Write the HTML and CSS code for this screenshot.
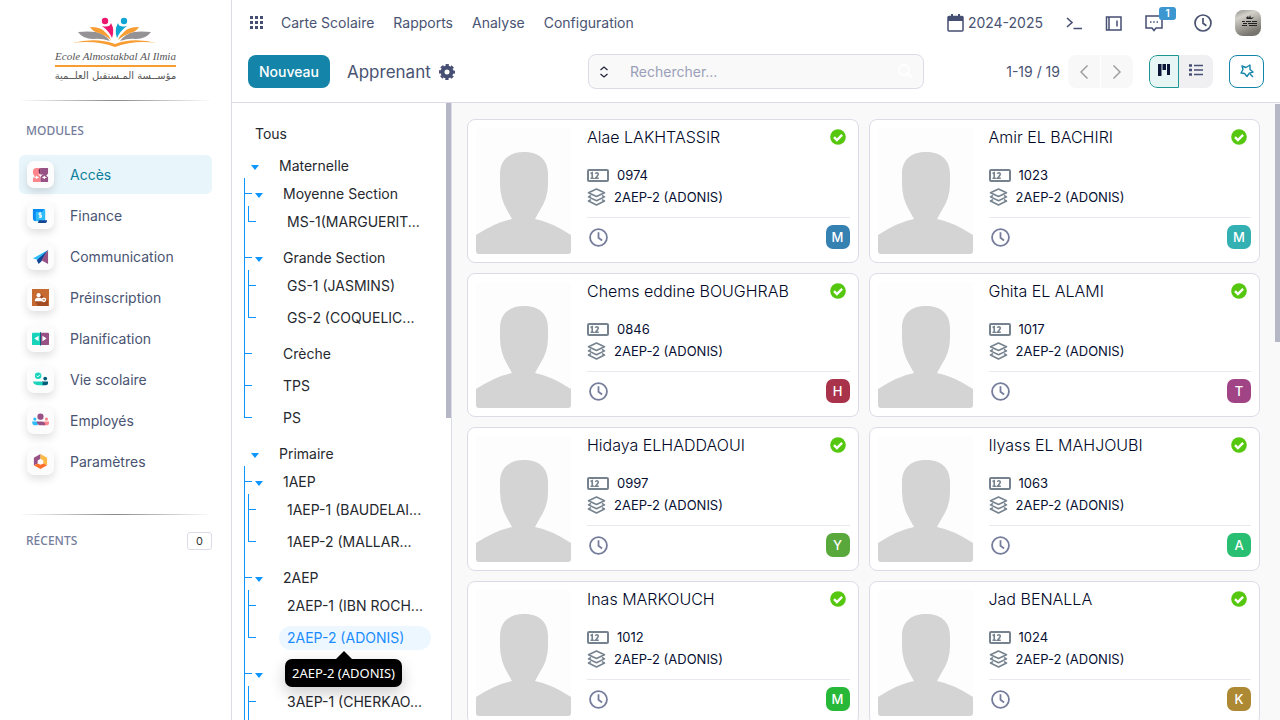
FILE: index.html
```html
<!DOCTYPE html>
<html lang="fr">
<head>
<meta charset="utf-8">
<meta name="viewport" content="width=device-width, initial-scale=1">
<title>Apprenant</title>
<link rel="stylesheet" href="styles.css">
</head>
<body>
<svg class="sprite" aria-hidden="true">
  <symbol id="person" viewBox="0 0 95 126"><rect width="95" height="126" fill="#fdfdfd"/><path d="M0 126V107Q20 94 36 91L31 82Q24 70 24 56V46C24 31 34 24 48 24S72 31 72 46V56Q72 70 64 82L59 91Q75 94 95 107V126Z" fill="#d4d4d4"/></symbol>
  <symbol id="code" viewBox="0 0 22 13"><rect x="1" y="1" width="20" height="11" rx="1" fill="none" stroke="#76838f" stroke-width="2"/><path d="M3.500 4.500l1.700-.8v5.600M3.500 9.300h3.400M8.400 4.900q.3-1.200 1.500-1.200t1.400 1.200q0 1-2.900 4.400h3.400" fill="none" stroke="#76838f" stroke-width="1.600"/></symbol>
  <symbol id="layers" viewBox="0 0 18 18"><g fill="none" stroke="#76838f" stroke-width="1.600" stroke-linejoin="round"><path d="M9 1l8 3.700-8 3.700-8-3.700z"/><path d="M3.500 7.500L1 8.900l8 3.900 8-3.900-2.500-1.400"/><path d="M3.500 11.600L1 13l8 4 8-4-2.500-1.400"/></g></symbol>
  <symbol id="clock" viewBox="0 0 18 18"><g fill="none" stroke="currentColor" stroke-width="1.700"><circle cx="9" cy="9" r="8"/><path d="M9 4v5.300l3.400 2.500"/></g></symbol>
  <symbol id="check" viewBox="0 0 16 16"><circle cx="8" cy="8" r="7.800" fill="#56c70f"/><path d="M4 8.200l2.900 2.900 5.200-5.300" fill="none" stroke="#fff" stroke-width="2.400"/></symbol>
</svg>

<aside class="sidebar">
  <div class="brand">
    <svg class="brand-mark" viewBox="0 0 90 31" aria-hidden="true">
      <path d="M7 16q10-1 18 0 9 2 14 9-9-3-17-2-10 0-15-7zM80 16q-10-1-17 0-9 2-14 9 9-3 16-2 10 0 15-7z" fill="#949294"/>
      <path d="M19 11q11 0 15 5 4 3 6 8-6-5-12-7-6-1-9-6zM68 11q-11 0-15 5-4 3-6 8 6-5 12-7 6-1 9-6z" fill="#f89d32"/>
      <path d="M1 27q24-6 43 1 18-7 42-1-23-3-42 4-19-7-43-4z" fill="#f89d32"/>
      <circle cx="34" cy="5" r="3.200" fill="#ec176d"/><path d="M31 10q8 2 9-3 4 7 1 15-3-7-10-12z" fill="#ec176d"/>
      <circle cx="53" cy="5" r="3.200" fill="#10a5d3"/><path d="M56 10q-8 2-9-3-4 7-1 15 3-7 10-12z" fill="#10a5d3"/>
    </svg>
    <div class="brand-latin">Ecole Almostakbal Al Ilmia</div>
    <div class="brand-arabic" lang="ar" dir="rtl">مؤســسة المـستقبل العلــمية</div>
  </div>
  <div class="rule"></div>
  <h2 class="side-title">MODULES</h2>
  <nav class="modules">
    <a class="module active" href="#"><span class="tile"><svg viewBox="0 0 18 18"><path d="M1 8V6q0-4 4-4h4v7H6q3 1 3 3v5H1v-4l2-2z" fill="#fc868b"/><path d="M9 2h8v6l-2 2 2 2v5H9v-5q0-2 3-3H9z" fill="#985184"/><path d="M9 2v7q-2-1-2-4 0-2 2-3z" fill="#6f2f5d"/><path d="M5 10l1 1.500 2 .5-2 .8L5 14l-1-1.200L2 12l2-.5zM13 10l1 1.500 2 .5-2 .8-1 1.200-1-1.200-2-.8 2-.5z" fill="#fff"/></svg></span>Accès</a>
    <a class="module" href="#"><span class="tile"><svg viewBox="0 0 18 18"><path d="M1 2h12q1 0 1 2v11H6q-3 0-4-1-1-1-1-4z" fill="#2ebcfa"/><path d="M1 2h12l-2 3H4v10q-3 0-3-4z" fill="#088bf5"/><path d="M7 14h9q0 3-3 3H5q2 0 2-3z" fill="#144496"/><path d="M10 6.500H7.500v2H10v2.300H7.200M8.600 5.500v6.200" fill="none" stroke="#fff"/></svg></span>Finance</a>
    <a class="module" href="#"><span class="tile"><svg viewBox="0 0 18 18"><path d="M1 11L17 2 8 13z" fill="#2ebcfa"/><path d="M17 2L5 13l2 4 3-3z" fill="#144496"/><path d="M17 2v15l-7-4z" fill="#985184"/></svg></span>Communication</a>
    <a class="module" href="#"><span class="tile"><svg viewBox="0 0 18 18"><path d="M0 0h18v18H0z" fill="#c66a32"/><path d="M3 13l5-9 9 9v5H6z" fill="#a44d22"/><circle cx="7" cy="6.500" r="2.200" fill="#fff"/><path d="M3 13q0-4 4-4 3 0 4 2v2z" fill="#fff"/><circle cx="12.500" cy="11.500" r="2.500" fill="#fff"/><path d="M11.300 11.500h2.400" stroke="#a44d22"/></svg></span>Préinscription</a>
    <a class="module" href="#"><span class="tile"><svg viewBox="0 0 18 18"><path d="M1 3h8v13H1q-1 0-1-1V4q0-1 1-1z" fill="#1ad3bb"/><path d="M9 3h8q1 0 1 1v11q0 1-1 1H9z" fill="#985184"/><path d="M8.500 2.500h1v14h-1z" fill="#005e7a"/><path d="M7 6v6L2.500 9zM11 6v6l4.500-3z" fill="#fff"/></svg></span>Planification</a>
    <a class="module" href="#"><span class="tile"><svg viewBox="0 0 18 18"><circle cx="6.500" cy="5" r="3.500" fill="#1ad3bb"/><path d="M4.800 5l1.300 1.300 2.500-2.500" fill="none" stroke="#fff"/><path d="M1 11h8q3 0 3 4H7q-5 0-6-4z" fill="#1ad3bb"/><circle cx="14" cy="8" r="2" fill="#005e7a"/><path d="M10 11h7v2q0 2-3 2h-3q1-3-1-4z" fill="#005e7a"/></svg></span>Vie scolaire</a>
    <a class="module" href="#"><span class="tile"><svg viewBox="0 0 18 18"><circle cx="9" cy="5" r="3.300" fill="#985184"/><circle cx="3" cy="7.500" r="1.700" fill="#2ebcfa"/><circle cx="15.300" cy="7.500" r="1.700" fill="#fc868b"/><path d="M0 10h6v4H2q-2-1-2-4z" fill="#2ebcfa"/><path d="M12 10h6v2q0 2-2 2h-4z" fill="#fc868b"/><path d="M5 10h5q4 0 4 4H8q-3-1-3-4z" fill="#985184"/></svg></span>Employés</a>
    <a class="module" href="#"><span class="tile"><svg viewBox="0 0 18 18"><path d="M9 1v5L6 8v3l-4 2V5z" fill="#985184"/><path d="M9 1l7 4v8l-4-2V8L9 6z" fill="#fbb945"/><path d="M2 13l4-2 3 1.500 3-1.500 4 2-7 4z" fill="#fc6f2b"/></svg></span>Paramètres</a>
  </nav>
  <div class="rule"></div>
  <div class="recents"><h2>RÉCENTS</h2><span class="count">0</span></div>
</aside>

<div class="main">
  <header class="header">
    <div class="topbar">
      <button class="icon-button" aria-label="Applications"><svg width="14" height="14" viewBox="0 0 14 14" fill="#454e73"><path d="M0 0h3v3H0zM5 0h3v3H5zM10 0h3v3h-3zM0 5h3v3H0zM5 5h3v3H5zM10 5h3v3h-3zM0 10h3v3H0zM5 10h3v3H5zM10 10h3v3h-3z"/></svg></button>
      <nav class="menu"><a href="#">Carte Scolaire</a><a href="#">Rapports</a><a href="#">Analyse</a><a href="#">Configuration</a></nav>
      <div class="systray">
        <button class="icon-button year"><svg width="17" height="18" viewBox="0 0 17 18"><path d="M2 2.500h13q1 0 1 1V16q0 1-1 1H2q-1 0-1-1V3.500q0-1 1-1z" fill="none" stroke="#454e73" stroke-width="1.500"/><path d="M1 3h15v4H1zM4 0h2v4H4zM11 0h2v4h-2z" fill="#454e73"/></svg>2024-2025</button>
        <button class="icon-button" aria-label="Console"><svg width="16" height="14" viewBox="0 0 16 14" fill="none" stroke="#454e73" stroke-width="1.600"><path d="M1 2l5 4.500L1 11M7.500 12.500H16"/></svg></button>
        <button class="icon-button" aria-label="Panneau"><svg width="17" height="15" viewBox="0 0 17 15" fill="none" stroke="#454e73" stroke-width="1.500"><path d="M4 1h12v13H4zM4 1H1.500v13H4M12 4.500v6"/></svg></button>
        <button class="icon-button chat" aria-label="Messages"><svg width="18" height="17" viewBox="0 0 18 17" fill="none" stroke="#454e73" stroke-width="1.500"><path d="M1 1h16v12h-6l-2 2.500L7 13H1z"/><path d="M5 7h1.500M8.200 7h1.500M11.500 7H13" stroke-width="1.700"/></svg><span class="badge">1</span></button>
        <button class="icon-button" aria-label="Activités"><svg width="18" height="18"><use href="#clock"/></svg></button>
        <button class="icon-button" aria-label="Profil"><svg class="profile" viewBox="0 0 26 26"><defs><linearGradient id="wall" x1="0" y1="0" x2="0.400" y2="1"><stop offset="0" stop-color="#8f8d88"/><stop offset=".3" stop-color="#d3d1ca"/><stop offset="1" stop-color="#77736d"/></linearGradient></defs><path d="M0 0h26v26H0z" fill="url(#wall)"/><path d="M11 8l2-2 1 2 1-3 1 3 3-1-2 2h-5z" fill="#222"/><path d="M7 11.500h3m1 0h5m1 0h5M8 13.500h4m1 0h9M7 15.500h5m2 0h8" stroke="#222" stroke-width="1.200"/></svg></button>
      </div>
    </div>
    <div class="control">
      <div class="control-left">
        <button class="primary">Nouveau</button>
        <h1>Apprenant</h1>
        <button class="icon-button" aria-label="Actions"><svg width="16" height="16" viewBox="0 0 16 16"><circle cx="8" cy="8" r="4.500" fill="none" stroke="#454e73" stroke-width="4"/><circle cx="8" cy="8" r="7" fill="none" stroke="#454e73" stroke-width="2" stroke-dasharray="3.300 2.198" stroke-dashoffset="1.650"/></svg></button>
      </div>
      <form class="search" role="search">
        <button type="button" class="icon-button" aria-label="Filtres"><svg width="10" height="12" viewBox="0 0 10 12" fill="none" stroke="#26263d" stroke-width="1.300"><path d="M1.500 4L5 1l3.500 3M1.500 8L5 11l3.500-3"/></svg></button>
        <input type="search" aria-label="Rechercher" placeholder="Rechercher...">
        <svg width="15" height="15" viewBox="0 0 15 15" fill="none" stroke="#fff" stroke-width="1.800"><circle cx="6" cy="6" r="5"/><path d="M10 10l4.500 4"/></svg>
      </form>
      <div class="control-right">
        <span class="pages">1-19 / 19</span>
        <div class="group pager"><button aria-label="Précédent"><svg width="10" height="16" viewBox="0 0 10 16"><path d="M8.500 1.500L2 8l6.500 6.500"/></svg></button><button aria-label="Suivant"><svg width="10" height="16" viewBox="0 0 10 16"><path d="M1.500 1.500L8 8l-6.500 6.500"/></svg></button></div>
        <div class="group views"><button class="selected" aria-label="Kanban"><svg width="14" height="14" viewBox="0 0 14 14" fill="#0c1637"><path d="M1 1h3.500v12H1zM5.500 1H9v6H5.500zM10 1h3v11h-3z"/></svg></button><button aria-label="Liste"><svg width="14" height="12" viewBox="0 0 14 12" stroke="#454e73" stroke-width="1.500"><path d="M5 1.500h9M5 6h9M5 10.500h9"/><path d="M0 1.500h3M0 6h3M0 10.500h3" stroke-width="2.400"/></svg></button></div>
        <button class="outline" aria-label="Assistant"><svg width="16" height="16" viewBox="0 0 16 16" fill="none" stroke="#1485a8" stroke-width="1.400" stroke-linejoin="round"><path d="M3 3l4 1.500L11 2v4.500l3 2.500-3.700 1.200L8 13.500l-2.500-3L2 10l2-3.500zM11 11l3 3"/></svg></button>
      </div>
    </div>
  </header>

  <div class="body">
    <section class="panel">
      <div class="tree">
        <ul class="root">
          <li><div class="row all"><a href="#">Tous</a></div></li>
          <li><div class="row parent"><a href="#">Maternelle</a></div>
            <ul>
              <li><div class="row parent"><a href="#">Moyenne Section</a></div>
                <ul><li><div class="row"><a href="#">MS-1(MARGUERIT...</a></div></li></ul></li>
              <li><div class="row parent"><a href="#">Grande Section</a></div>
                <ul><li><div class="row"><a href="#">GS-1 (JASMINS)</a></div></li><li><div class="row"><a href="#">GS-2 (COQUELIC...</a></div></li></ul></li>
              <li><div class="row"><a href="#">Crèche</a></div></li>
              <li><div class="row"><a href="#">TPS</a></div></li>
              <li><div class="row"><a href="#">PS</a></div></li>
            </ul></li>
          <li><div class="row parent"><a href="#">Primaire</a></div>
            <ul>
              <li><div class="row parent"><a href="#">1AEP</a></div>
                <ul><li><div class="row"><a href="#">1AEP-1 (BAUDELAI...</a></div></li><li><div class="row"><a href="#">1AEP-2 (MALLAR...</a></div></li></ul></li>
              <li><div class="row parent"><a href="#">2AEP</a></div>
                <ul><li><div class="row"><a href="#">2AEP-1 (IBN ROCH...</a></div></li><li><div class="row current"><a href="#">2AEP-2 (ADONIS)</a><span class="tooltip" role="tooltip">2AEP-2 (ADONIS)</span></div></li></ul></li>
              <li><div class="row parent"><a href="#" aria-label="3AEP"></a></div>
                <ul><li><div class="row"><a href="#">3AEP-1 (CHERKAO...</a></div></li><li><div class="row"></div></li></ul></li>
              <li><div class="row"></div></li>
            </ul></li>
        </ul>
      </div>
      <div class="thumb panel-thumb"></div>
    </section>

    <main class="content">
      <div class="cards">
        <article class="card"><svg class="photo"><use href="#person"/></svg><div class="info"><div class="head"><h3>Alae LAKHTASSIR</h3><svg class="ok"><use href="#check"/></svg></div><p class="code"><svg><use href="#code"/></svg>0974</p><p class="class"><svg><use href="#layers"/></svg>2AEP-2 (ADONIS)</p><div class="foot"><button class="icon-button" aria-label="Activités"><svg><use href="#clock"/></svg></button><span class="avatar blue">M</span></div></div></article>
        <article class="card"><svg class="photo"><use href="#person"/></svg><div class="info"><div class="head"><h3>Amir EL BACHIRI</h3><svg class="ok"><use href="#check"/></svg></div><p class="code"><svg><use href="#code"/></svg>1023</p><p class="class"><svg><use href="#layers"/></svg>2AEP-2 (ADONIS)</p><div class="foot"><button class="icon-button" aria-label="Activités"><svg><use href="#clock"/></svg></button><span class="avatar teal">M</span></div></div></article>
        <article class="card"><svg class="photo"><use href="#person"/></svg><div class="info"><div class="head"><h3>Chems eddine BOUGHRAB</h3><svg class="ok"><use href="#check"/></svg></div><p class="code"><svg><use href="#code"/></svg>0846</p><p class="class"><svg><use href="#layers"/></svg>2AEP-2 (ADONIS)</p><div class="foot"><button class="icon-button" aria-label="Activités"><svg><use href="#clock"/></svg></button><span class="avatar red">H</span></div></div></article>
        <article class="card"><svg class="photo"><use href="#person"/></svg><div class="info"><div class="head"><h3>Ghita EL ALAMI</h3><svg class="ok"><use href="#check"/></svg></div><p class="code"><svg><use href="#code"/></svg>1017</p><p class="class"><svg><use href="#layers"/></svg>2AEP-2 (ADONIS)</p><div class="foot"><button class="icon-button" aria-label="Activités"><svg><use href="#clock"/></svg></button><span class="avatar purple">T</span></div></div></article>
        <article class="card"><svg class="photo"><use href="#person"/></svg><div class="info"><div class="head"><h3>Hidaya ELHADDAOUI</h3><svg class="ok"><use href="#check"/></svg></div><p class="code"><svg><use href="#code"/></svg>0997</p><p class="class"><svg><use href="#layers"/></svg>2AEP-2 (ADONIS)</p><div class="foot"><button class="icon-button" aria-label="Activités"><svg><use href="#clock"/></svg></button><span class="avatar olive">Y</span></div></div></article>
        <article class="card"><svg class="photo"><use href="#person"/></svg><div class="info"><div class="head"><h3>Ilyass EL MAHJOUBI</h3><svg class="ok"><use href="#check"/></svg></div><p class="code"><svg><use href="#code"/></svg>1063</p><p class="class"><svg><use href="#layers"/></svg>2AEP-2 (ADONIS)</p><div class="foot"><button class="icon-button" aria-label="Activités"><svg><use href="#clock"/></svg></button><span class="avatar mint">A</span></div></div></article>
        <article class="card"><svg class="photo"><use href="#person"/></svg><div class="info"><div class="head"><h3>Inas MARKOUCH</h3><svg class="ok"><use href="#check"/></svg></div><p class="code"><svg><use href="#code"/></svg>1012</p><p class="class"><svg><use href="#layers"/></svg>2AEP-2 (ADONIS)</p><div class="foot"><button class="icon-button" aria-label="Activités"><svg><use href="#clock"/></svg></button><span class="avatar green">M</span></div></div></article>
        <article class="card"><svg class="photo"><use href="#person"/></svg><div class="info"><div class="head"><h3>Jad BENALLA</h3><svg class="ok"><use href="#check"/></svg></div><p class="code"><svg><use href="#code"/></svg>1024</p><p class="class"><svg><use href="#layers"/></svg>2AEP-2 (ADONIS)</p><div class="foot"><button class="icon-button" aria-label="Activités"><svg><use href="#clock"/></svg></button><span class="avatar gold">K</span></div></div></article>
      </div>
      <div class="thumb content-thumb"></div>
    </main>
  </div>
</div>
</body>
</html>
```

FILE: styles.css
```css
* { box-sizing: border-box; }
body { margin: 0; height: 100vh; display: flex; overflow: hidden; background: #fff; color: #495372; font: 14px/20px Inter, sans-serif; }
h1, h2, h3, p, ul { margin: 0; padding: 0; font-weight: 400; }
ul { list-style: none; }
a { color: inherit; text-decoration: none; }
button { font: inherit; color: inherit; cursor: pointer; }
svg { flex: none; }
.sprite { position: absolute; width: 0; height: 0; }
.icon-button { display: inline-flex; align-items: center; padding: 0; border: 0; background: none; }

/* Sidebar */
.sidebar { width: 232px; flex: none; border-right: 1px solid #dcdce8; padding: 16px 19px 0; }
.brand { display: flex; flex-direction: column; align-items: center; height: 84px; color: #555; }
.brand-mark { width: 90px; height: 31px; overflow: visible; }
.brand-latin { font: italic 11px/18px "Liberation Serif", serif; border-bottom: 2px solid #f89d32; white-space: nowrap; }
.brand-arabic { font: 10px/18px "DejaVu Sans", sans-serif; white-space: nowrap; }
.rule { height: 1px; background: linear-gradient(90deg, transparent, #888, transparent); }
.side-title, .recents h2 { font: 500 12px/20px "Noto Sans", sans-serif; color: #767d9c; }
.side-title { padding: 20px 7px 14px; }
.modules { display: flex; flex-direction: column; gap: 2px; padding-bottom: 33px; }
.module { display: flex; align-items: center; gap: 16px; height: 39px; padding-left: 8px; border-radius: 6px; line-height: 18px; }
.module.active { background: #e8f5fa; color: #0d7f9b; }
.tile { width: 27px; height: 27px; display: grid; place-items: center; border-radius: 7px; background: #fcfcfc; box-shadow: 0 4px 8px #00000020; }
.tile svg { width: 17px; height: 17px; }
.recents { display: flex; justify-content: space-between; align-items: center; padding: 16px 0 0 7px; }
.count { width: 25px; border: 1px solid #dcdce8; border-radius: 3px; font-size: 11px; line-height: 16px; text-align: center; color: #333; }

/* Header */
.main { flex: 1; min-width: 0; display: flex; flex-direction: column; }
.header { border-bottom: 1px solid #dcdce8; padding: 0 16px 13px 18px; }
.topbar { display: flex; align-items: center; height: 46px; gap: 17px; }
.menu { display: flex; gap: 19px; }
.systray { margin-left: auto; padding-right: 3px; display: flex; align-items: center; gap: 23px; }
.year { gap: 4px; }
.chat { position: relative; margin-right: 8px; }
.badge { position: absolute; left: 14px; top: -8px; width: 17px; border-radius: 3px; background: #3c96cf; color: #fff; font-size: 10px; font-weight: 600; line-height: 13px; text-align: center; }
.profile { width: 26px; height: 26px; border-radius: 8px; }
.control { display: grid; grid-template-columns: 1fr 336px 1fr; align-items: center; height: 43px; padding-top: 8px; margin-left: -2px; }
.control-left, .control-right { display: flex; align-items: center; }
.control-right { justify-content: flex-end; }
.primary { height: 33px; padding: 0 11px; border: 0; border-radius: 8px; background: #1485a8; color: #fff; font-weight: 500; }
h1 { font-size: 17px; line-height: 24px; margin: 0 8px 0 17px; }
.search { display: flex; align-items: center; height: 35px; padding: 0 10px; border: 1px solid #dcdce8; border-radius: 8px; background: #f9f9f9; }
.search input { flex: 1; min-width: 0; margin-left: 21px; padding: 0; border: 0; outline: 0; background: none; font: inherit; }
.search input::placeholder { color: #9a9fb8; opacity: 1; }
.pages { margin-right: 8px; white-space: nowrap; }
.group { display: flex; height: 33px; border-radius: 8px; overflow: hidden; }
.group button { display: grid; place-items: center; padding: 0; border: 0; }
.pager { gap: 1px; margin-right: 16px; }
.pager button { width: 32px; background: #f8f8f8; }
.pager path { fill: none; stroke: #999; stroke-width: 1.4px; }
.views { margin-right: 16px; }
.views button { width: 34px; padding-bottom: 4px; background: #f0f0f3; }
.views .selected { width: 30px; border: 1px solid #1b9690; border-radius: 8px 0 0 8px; background: #e8f5f5; }
.outline { width: 35px; height: 33px; display: grid; place-items: center; padding: 0 0 2px; border: 1px solid #1485a8; border-radius: 8px; background: #fff; }

/* Class tree */
.body { flex: 1; min-height: 0; display: flex; }
.panel { position: relative; width: 220px; flex: none; border-right: 1px solid #dcdce8; overflow: hidden; color: #25282e; }
.tree { padding: 19px 20px 0 15px; }
.tree li { position: relative; }
.tree li + li { margin-top: 8px; }
.tree ul ul { padding: 4px 0 4px 4px; }
.row { position: relative; height: 24px; padding-left: 24px; }
.row.all { padding-left: 0; }
.row a { display: block; padding: 2px 8px; border-radius: 12px; white-space: nowrap; }
.row.parent::before { content: ""; position: absolute; left: 4px; top: 11px; border: 5px solid transparent; border-width: 5px 4px 0; border-top-color: #0d95ff; }
.tree ul ul > li::before { content: ""; position: absolute; left: -7px; top: -8px; bottom: 0; width: 1px; background: #0d95ff; }
.tree ul ul > li:first-child::before { top: -4px; }
.tree ul ul > li:last-child::before { bottom: auto; height: 20px; }
.tree ul ul > li:only-child::before { height: 16px; }
.tree ul ul > li::after { content: ""; position: absolute; left: -7px; top: 11px; width: 8px; height: 1px; background: #0d95ff; }
.current a { background: #edf7ff; color: #1a8cff; }
.tooltip { position: absolute; z-index: 2; left: 30px; top: 33px; padding: 4px 7px; border-radius: 7px; background: #000; color: #fff; font: 13px/20px "Noto Sans", sans-serif; white-space: nowrap; box-shadow: 0 6px 16px #0003; }
.tooltip::before { content: ""; position: absolute; left: 50%; margin-left: -8px; top: -8px; border: 8px solid transparent; border-top: 0; border-bottom-color: #000; }
.thumb { position: absolute; right: 0; background: #b5b7c7; }
.panel-thumb { top: 0; width: 5px; height: 51%; }
.content-thumb { top: 1px; width: 5px; height: 238px; }

/* Student cards */
.content { position: relative; flex: 1; min-width: 0; overflow: hidden; background: #f9f9f9; padding: 16px 20px 0 15px; }
.cards { display: grid; grid-template-columns: 1fr 1fr; gap: 10px; }
.card { display: flex; gap: 16px; padding: 8px; border: 1px solid #dcdce8; border-radius: 8px; background: #fff; color: #061033; }
.photo { width: 95px; height: 126px; border-radius: 3px; }
.info { flex: 1; min-width: 0; }
.head { display: flex; align-items: center; justify-content: space-between; padding-right: 4px; margin-bottom: 18px; }
h3 { font-size: 16px; font-weight: 300; line-height: 18px; color: #000828; }
.ok { width: 16px; height: 16px; }
.info p { display: flex; align-items: center; font-size: 13px; line-height: 22px; }
.code svg { width: 22px; height: 13px; margin-right: 8px; }
.class svg { width: 19px; height: 18px; margin-right: 8px; }
.foot { display: flex; align-items: center; justify-content: space-between; border-top: 1px solid #e8e8ee; margin-top: 9px; padding: 7px 0 5px 2px; color: #767d9c; }
.foot svg { width: 19px; height: 19px; }
.avatar { width: 24px; height: 24px; border-radius: 7px; color: #fff; font-size: 13px; font-weight: 500; line-height: 24px; text-align: center; }
.blue { background: #3581b2; }
.teal { background: #32b0b2; }
.red { background: #a9334a; }
.purple { background: #a04485; }
.olive { background: #58a83c; }
.mint { background: #29bf72; }
.green { background: #27b837; }
.gold { background: #ad8934; }
```
